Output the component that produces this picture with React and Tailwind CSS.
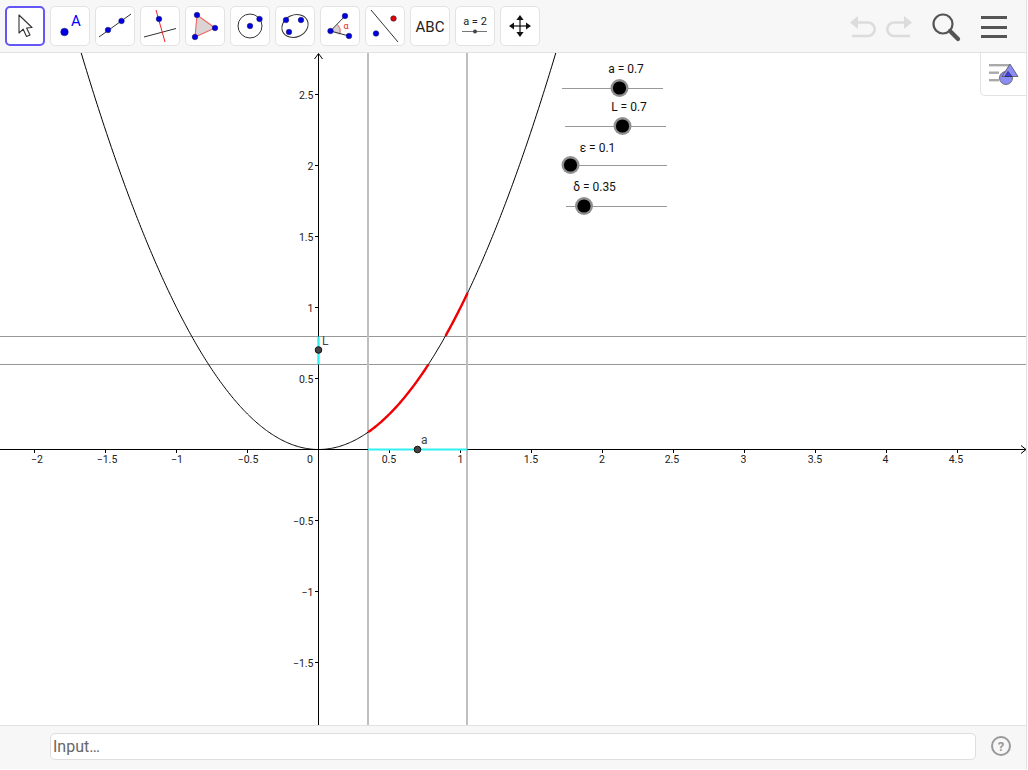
import React from "react";

const X0 = 318.5, Y0 = 449.5, U = 142;
const px = (x) => X0 + x * U;
const py = (y) => Y0 - y * U;
const curve = (a, b) => {
  const n = Math.max(2, Math.ceil((b - a) * 120));
  let d = "";
  for (let i = 0; i <= n; i++) {
    const x = a + ((b - a) * i) / n;
    d += (i ? "L" : "M") + px(x).toFixed(2) + " " + py(x * x).toFixed(2);
  }
  return d;
};

const F = { fontFamily: "Roboto, sans-serif" };
const BLUE = "#0000e0";
const P = ({ x, y, r = 2.8, f = BLUE }) => <circle cx={x} cy={y} r={r} fill={f} stroke="#1a1a5a" strokeWidth="0.5" />;

const icons = [
  <path key="0" d="M14 9 L14 27 L18.2 23.2 L21.5 30.5 L25 29 L21.6 22 L27 21.5 Z" fill="#fff" stroke="#333" strokeWidth="1.1" strokeLinejoin="round" />,
  <g key="1">
    <circle cx="14.5" cy="26" r="3.8" fill={BLUE} stroke="#1a1a5a" strokeWidth="0.5" />
    <text x="26" y="19.5" textAnchor="middle" fontSize="15" fill="#0000ff" style={F}>A</text>
  </g>,
  <g key="2">
    <line x1="4" y1="31" x2="36" y2="8" stroke="#333" strokeWidth="1" />
    <P x="13" y="24" /><P x="26.5" y="15" />
  </g>,
  <g key="3">
    <line x1="4" y1="31" x2="36" y2="22.5" stroke="#333" strokeWidth="1" />
    <line x1="16" y1="4" x2="25" y2="36" stroke="#e22" strokeWidth="1" />
    <P x="19" y="13" />
  </g>,
  <g key="4">
    <polygon points="12,9 30,22 10,31" fill="#dcd4d4" stroke="#e66" strokeWidth="1.1" />
    <P x="12" y="9" /><P x="30" y="22" /><P x="10" y="31" />
  </g>,
  <g key="5">
    <circle cx="20" cy="20" r="12" fill="none" stroke="#333" strokeWidth="1" />
    <P x="20" y="20" /><P x="29.5" y="13" />
  </g>,
  <g key="6">
    <ellipse cx="20" cy="20" rx="13.5" ry="11" transform="rotate(-25 20 20)" fill="none" stroke="#333" strokeWidth="1" />
    <P x="11" y="14" /><P x="26" y="14" /><P x="14" y="26" />
  </g>,
  <g key="7">
    <path d="M10.5 25 L17.5 18.5 A10 10 0 0 1 20 29 Z" fill="#d8d0d0" stroke="none" />
    <path d="M17.5 18.5 A10 10 0 0 1 20 28" fill="none" stroke="#e66" strokeWidth="1" />
    <line x1="10.5" y1="25" x2="25" y2="10" stroke="#333" strokeWidth="1" />
    <line x1="10.5" y1="25" x2="29" y2="30" stroke="#333" strokeWidth="1" />
    <P x="10.5" y="25" /><P x="25" y="10" /><P x="29" y="30" />
    <text x="26" y="23" textAnchor="middle" fontSize="9" fill="#e22" style={F}>α</text>
  </g>,
  <g key="8">
    <line x1="6" y1="4" x2="33" y2="36" stroke="#333" strokeWidth="1" />
    <P x="11" y="27.5" /><P x="28.5" y="12.5" f="#e00000" />
  </g>,
  <text key="9" x="20" y="25.5" textAnchor="middle" fontSize="15" fill="#222" style={F}>ABC</text>,
  <g key="10">
    <text x="20" y="19" textAnchor="middle" fontSize="11" fill="#222" style={F}>a = 2</text>
    <line x1="7" y1="25.5" x2="32" y2="25.5" stroke="#777" strokeWidth="1" />
    <circle cx="20" cy="25.5" r="2" fill="#444" />
  </g>,
  <g key="11" fill="#111" stroke="none">
    <rect x="19.4" y="12" width="1.2" height="16" />
    <rect x="12" y="19.4" width="16" height="1.2" />
    <polygon points="20,9 16.4,14 23.6,14" />
    <polygon points="20,31 16.4,26 23.6,26" />
    <polygon points="9,20 14,16.4 14,23.6" />
    <polygon points="31,20 26,16.4 26,23.6" />
  </g>,
];

const xTicks = [
  [-2, "−2", 37], [-1.5, "−1.5", 107], [-1, "−1", 177], [-0.5, "−0.5", 248],
  [0.5, "0.5", 389], [1, "1", 460.5], [1.5, "1.5", 531], [2, "2", 602], [2.5, "2.5", 672],
  [3, "3", 743.5], [3.5, "3.5", 815], [4, "4", 885.5], [4.5, "4.5", 956],
];
const yTicks = [[2.5, "2.5"], [2, "2"], [1.5, "1.5"], [1, "1"], [0.5, "0.5"], [-0.5, "−0.5"], [-1, "−1"], [-1.5, "−1.5"]];

const sliders = [
  { x1: 562, x2: 663, y: 88.5, t: 619.5, label: "a = 0.7", lx: 626, ly: 73 },
  { x1: 565, x2: 666, y: 126.5, t: 622.5, label: "L = 0.7", lx: 629, ly: 111 },
  { x1: 564, x2: 667, y: 165.5, t: 570.5, label: "ε = 0.1", lx: 597.5, ly: 152 },
  { x1: 566, x2: 667, y: 206.5, t: 584, label: "δ = 0.35", lx: 594.5, ly: 191 },
];

function Graph() {
  return (
    <svg className="block w-full h-full" viewBox="0 53 1026 672" style={F}>
      <line x1="0" x2="1026" y1="336.5" y2="336.5" stroke="#999" strokeWidth="1" />
      <line x1="0" x2="1026" y1="364.5" y2="364.5" stroke="#999" strokeWidth="1" />
      <line x1="368" x2="368" y1="53" y2="725" stroke="#bfbfbf" strokeWidth="2" />
      <line x1="467" x2="467" y1="53" y2="725" stroke="#bfbfbf" strokeWidth="2" />
      <line x1="0" x2="1026" y1="449.5" y2="449.5" stroke="#000" strokeWidth="1" />
      <line x1="318.5" x2="318.5" y1="54" y2="725" stroke="#000" strokeWidth="1" />
      <path d="M1021 445.5 L1026 449.5 L1021 453.5" fill="none" stroke="#000" strokeWidth="1" />
      <path d="M314.5 59 L318.5 53.5 L322.5 59" fill="none" stroke="#000" strokeWidth="1" />
      {xTicks.map(([v, s, c]) => (
        <g key={s}>
          <line x1={px(v)} x2={px(v)} y1="449.5" y2="453" stroke="#000" strokeWidth="1" />
          <text x={c} y="463" textAnchor="middle" fontSize="10.5" fill="#222">{s}</text>
        </g>
      ))}
      <text x="310" y="463" textAnchor="middle" fontSize="10.5" fill="#222">0</text>
      {yTicks.map(([v, s]) => (
        <g key={s}>
          <line x1="315" x2="318.5" y1={py(v)} y2={py(v)} stroke="#000" strokeWidth="1" />
          <text x="313.5" y={py(v) + 4.5} textAnchor="end" fontSize="10.5" fill="#222">{s}</text>
        </g>
      ))}
      <path d={curve(-1.675, 1.675)} fill="none" stroke="#000" strokeWidth="1" />
      <path d={curve(0.35, Math.sqrt(0.6))} fill="none" stroke="#f00000" strokeWidth="2.4" />
      <path d={curve(Math.sqrt(0.8), 1.05)} fill="none" stroke="#f00000" strokeWidth="2.4" />
      <line x1="368" x2="467.5" y1="449.5" y2="449.5" stroke="#33f0f0" strokeWidth="2" />
      <line x1="318.5" x2="318.5" y1="336.5" y2="364.5" stroke="#33f0f0" strokeWidth="2.4" />
      <circle cx="318.5" cy="350" r="3.3" fill="#444" stroke="#111" strokeWidth="1" />
      <circle cx="417.5" cy="449.5" r="3.3" fill="#444" stroke="#111" strokeWidth="1" />
      <text x="322" y="345" fontSize="12" fill="#444">L</text>
      <text x="421" y="444" fontSize="12" fill="#444">a</text>
      {sliders.map((s) => (
        <g key={s.label}>
          <line x1={s.x1} x2={s.x2} y1={s.y} y2={s.y} stroke="#999" strokeWidth="1" />
          <circle cx={s.t} cy={s.y - 0.5} r="9" fill="#8f8f8f" />
          <circle cx={s.t} cy={s.y - 0.5} r="6.6" fill="#000" />
          <text x={s.lx} y={s.ly} textAnchor="middle" fontSize="12" fill="#111">{s.label}</text>
        </g>
      ))}
    </svg>
  );
}

export default function App() {
  return (
    <div className="w-[1028px] h-[770px] overflow-hidden bg-white" style={F}>
      <div className="relative flex flex-col w-[1027px] h-[769px] border-r border-[#e2e2e2]">
        <div className="flex items-start h-[53px] shrink-0 bg-[#f7f7f7] border-b border-[#e2e2e2] pt-[6px] pl-[5px]">
          <div className="flex gap-[5px]">
            {icons.map((ic, i) => (
              <div
                key={i}
                className={
                  "w-10 h-10 rounded-[5px] bg-white border " +
                  (i === 0 ? "border-[#6557f5] border-2" : "border-[#e3e3e3]")
                }
              >
                <svg viewBox="0 0 40 40" className={i === 0 ? "block w-10 h-10 -m-[2px]" : "block w-10 h-10 -m-px"}>{ic}</svg>
              </div>
            ))}
          </div>
          <div className="flex items-start ml-[309px] mt-[7px] gap-[7px]">
            <svg width="29" height="26" viewBox="0 0 29 26" className="-ml-[2px] w-[31px]">
              <path d="M10 3 L2 9.5 L10 16 Z" fill="#dcdcdc" />
              <path d="M6 9.5 H20 A6.5 6.5 0 0 1 20 23 H4" fill="none" stroke="#dcdcdc" strokeWidth="2.6" />
            </svg>
            <svg width="29" height="26" viewBox="0 0 29 26">
              <path d="M19 3 L27 9.5 L19 16 Z" fill="#dcdcdc" />
              <path d="M23 9.5 H9 A6.5 6.5 0 0 0 9 23 H25" fill="none" stroke="#dcdcdc" strokeWidth="2.6" />
            </svg>
            <svg width="30" height="30" viewBox="0 0 30 30" className="ml-[10px]">
              <circle cx="12" cy="11" r="9.5" fill="none" stroke="#555" strokeWidth="2.2" />
              <line x1="19" y1="18" x2="27" y2="26" stroke="#555" strokeWidth="4.2" strokeLinecap="round" />
            </svg>
            <div className="flex flex-col gap-[6.5px] w-[26px] ml-[13px] mt-[3px]">
              <div className="h-[3px] bg-[#555]" />
              <div className="h-[3px] bg-[#555]" />
              <div className="h-[3px] bg-[#555]" />
            </div>
          </div>
        </div>

        <div className="relative flex-1 min-h-0">
          <Graph />
          <div className="absolute top-0 right-0 w-[46px] h-[43px] bg-white border-l border-b border-[#e2e2e2] rounded-bl-[5px] flex items-center justify-center">
            <svg width="34" height="26" viewBox="0 0 34 26">
              <g fill="#aaa">
                <rect x="2" y="3" width="20" height="2.4" />
                <rect x="2" y="10.5" width="10" height="2.4" />
                <rect x="2" y="18" width="10" height="2.4" />
              </g>
              <circle cx="19" cy="17" r="6.5" fill="#8c8cf5" stroke="#555" strokeWidth="0.8" />
              <polygon points="23,3 31,15.5 15,15.5" fill="#8c8cf5" stroke="#555" strokeWidth="0.8" />
              <path d="M18 15.5 L21 10.5 L25 15.5 Z" fill="#4040ee" stroke="#222" strokeWidth="0.6" />
            </svg>
          </div>
        </div>

        <div className="flex items-start h-[44px] shrink-0 bg-[#f7f7f7] border-t border-[#e2e2e2] pl-[50px] pt-[7px]">
          <div className="w-[926px] h-[27px] bg-white border border-[#dedede] rounded-[5px] flex items-center pl-[2px] text-[16px] text-[#666]">
            Input…
          </div>
          <svg width="24" height="24" viewBox="0 0 24 24" className="ml-[13px] mt-[1px]">
            <circle cx="12" cy="12" r="9" fill="none" stroke="#999" strokeWidth="2" />
            <text x="12" y="16.5" textAnchor="middle" fontSize="13" fontWeight="700" fill="#999" style={F}>?</text>
          </svg>
        </div>
      </div>
    </div>
  );
}
